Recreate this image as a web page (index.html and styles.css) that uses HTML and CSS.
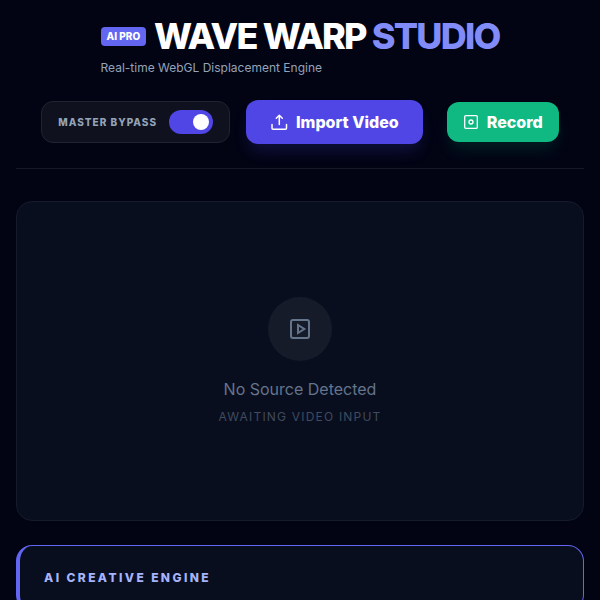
FILE: index.html
```html
<!DOCTYPE html>
<html lang="en">
<head>
<meta charset="utf-8">
<meta name="viewport" content="width=device-width, initial-scale=1">
<title>Wave Warp Studio</title>
<link rel="stylesheet" href="styles.css">
</head>
<body>
<header class="header">
  <div class="brand">
    <div class="brand-row">
      <span class="badge">AI PRO</span>
      <h1 class="title">WAVE WARP <span class="accent">STUDIO</span></h1>
    </div>
    <p class="subtitle">Real-time WebGL Displacement Engine</p>
  </div>
  <div class="controls">
    <div class="bypass">
      <label class="bypass-label" for="bypass">Master Bypass</label>
      <input class="switch" id="bypass" type="checkbox" role="switch" checked>
    </div>
    <div class="actions">
      <button class="button import" type="button">
        <svg width="20" height="20" viewBox="0 0 20 20" fill="none" stroke="currentColor" stroke-width="1.5" stroke-linecap="round" stroke-linejoin="round" aria-hidden="true"><path d="M2 12.500v3.700a1 1 0 0 0 1 1h12.500a1 1 0 0 0 1-1v-3.700M9.300 12.500v-9M6.300 6.300l3-3 3 3"/></svg>
        Import Video
      </button>
      <button class="button record" type="button">
        <svg width="16" height="16" viewBox="0 0 16 16" fill="none" stroke="currentColor" stroke-width="1.300" aria-hidden="true"><rect x="1.700" y="1.700" width="12.600" height="12.600" rx="1"/><circle cx="8" cy="8" r="2"/></svg>
        Record
      </button>
    </div>
  </div>
</header>
<main class="main">
  <section class="panel preview">
    <div class="preview-icon">
      <svg width="24" height="24" viewBox="0 0 24 24" fill="none" stroke="currentColor" stroke-width="2" aria-hidden="true"><rect x="3" y="3" width="18" height="18" rx="2"/><path d="M10 8v8l6.300-4z"/></svg>
    </div>
    <p class="preview-title">No Source Detected</p>
    <p class="preview-note">Awaiting video input</p>
  </section>
  <section class="panel engine">
    <h2 class="engine-title">AI Creative Engine</h2>
  </section>
</main>
</body>
</html>
```
FILE: styles.css
```css
* {
  box-sizing: border-box;
  margin: 0;
}

body {
  padding: 16px;
  background: #020414;
  color: #f8fafc;
  font-family: Inter, "Liberation Sans", sans-serif;
}

.header {
  display: flex;
  flex-direction: column;
  align-items: center;
  gap: 24px;
  padding-bottom: 24px;
  margin-bottom: 32px;
  border-bottom: 1px solid #151825;
}

.brand-row {
  display: flex;
  align-items: center;
  gap: 8px;
}

.badge {
  padding: 2px 6px;
  border-radius: 4px;
  background: #6366f1;
  color: #fff;
  font-size: 10px;
  font-weight: 800;
  line-height: 15px;
}

.title {
  color: #fff;
  font-size: 36px;
  font-weight: 800;
  line-height: 40px;
  letter-spacing: -0.05em;
}

.accent {
  color: #818cf8;
}

.subtitle {
  margin-top: 4px;
  color: #94a3b8;
  font-size: 12px;
  line-height: 16px;
}

.controls {
  display: flex;
  align-items: center;
  justify-content: center;
  gap: 16px;
}

.bypass {
  display: flex;
  align-items: center;
  gap: 12px;
  padding: 8px 16px;
  border: 1px solid #202331;
  border-radius: 12px;
  background: #0f111f;
}

.bypass-label {
  color: #94a3b8;
  font-size: 10px;
  font-weight: 800;
  line-height: 15px;
  letter-spacing: 0.1em;
  text-transform: uppercase;
  white-space: nowrap;
}

.switch {
  appearance: none;
  display: flex;
  align-items: center;
  width: 44px;
  height: 24px;
  padding: 4px;
  border-radius: 12px;
  background: #334155;
}

.switch::before {
  content: "";
  width: 16px;
  height: 16px;
  border-radius: 50%;
  background: #fff;
}

.switch:checked {
  justify-content: flex-end;
  background: #4f46e5;
}

.actions {
  display: flex;
  align-items: center;
  gap: 24px;
}

.button {
  display: flex;
  align-items: center;
  gap: 8px;
  border: 0;
  border-radius: 12px;
  color: #fff;
  font: 800 16px/24px Inter, "Liberation Sans", sans-serif;
  white-space: nowrap;
}

.import {
  gap: 6px;
  padding: 10px 24px;
  background: #4f46e5;
  box-shadow: 0 10px 15px -3px rgba(79, 70, 229, 0.2);
}

.record {
  padding: 8px 16px;
  background: #10b981;
  box-shadow: 0 10px 15px -3px rgba(16, 185, 129, 0.15);
}

.main {
  display: grid;
  gap: 24px;
}

.panel {
  border: 1px solid #151b2a;
  border-radius: 16px;
  background: #090e1f;
}

.preview {
  display: flex;
  flex-direction: column;
  align-items: center;
  justify-content: center;
  min-height: 320px;
}

.preview-icon {
  display: grid;
  place-items: center;
  width: 64px;
  height: 64px;
  margin-bottom: 16px;
  border-radius: 50%;
  background: #161b2a;
  color: #64748b;
}

.preview-title {
  color: #64748b;
  font-size: 16px;
  line-height: 24px;
}

.preview-note {
  margin-top: 8px;
  color: #3f4b5e;
  font-size: 12px;
  line-height: 16px;
  letter-spacing: 0.1em;
  text-transform: uppercase;
}

.engine {
  padding: 24px;
  border-color: #6366f1;
  border-left-width: 4px;
}

.engine-title {
  color: #a5b4fc;
  font-size: 12px;
  font-weight: 800;
  line-height: 16px;
  letter-spacing: 0.2em;
  text-transform: uppercase;
}
```
